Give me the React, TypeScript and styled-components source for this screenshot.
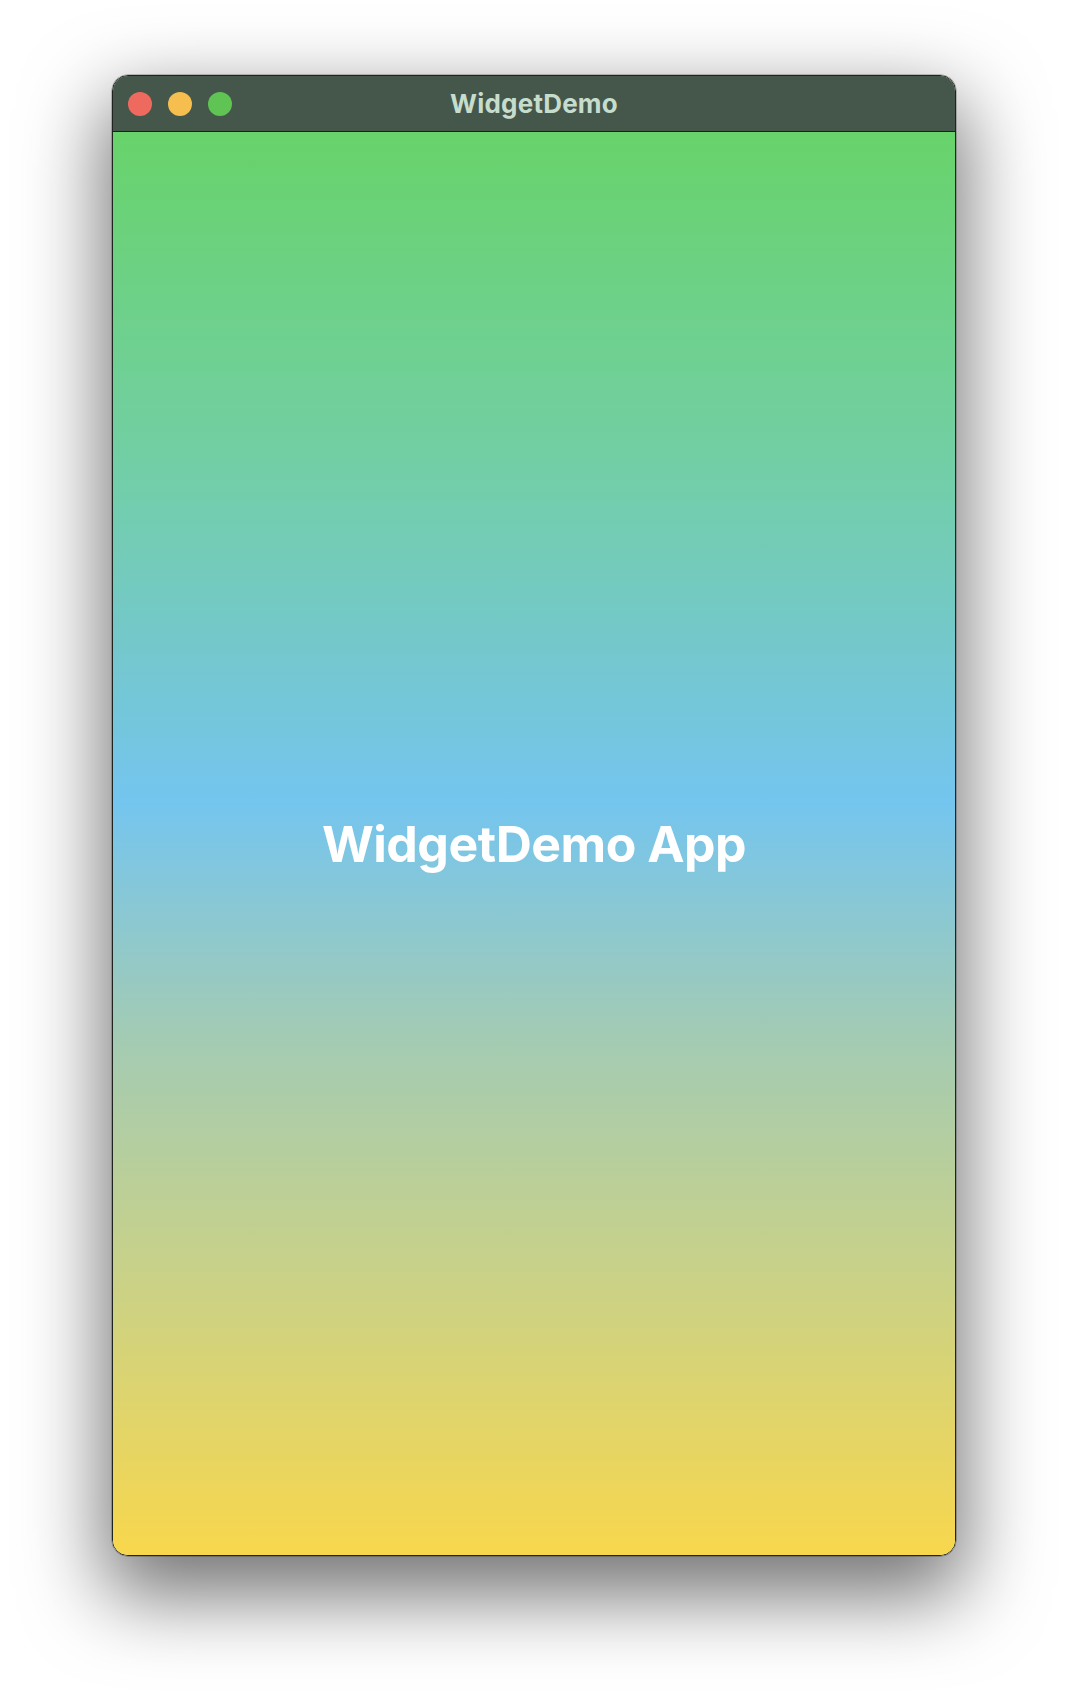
import React from "react";
import styled, { createGlobalStyle } from "styled-components";

const Global = createGlobalStyle`
  html, body { margin: 0; padding: 0; background: #ffffff; }
  body { font-family: Inter, "Noto Sans", "Liberation Sans", sans-serif; }
`;

const Page = styled.div`
  width: 1068px;
  height: 1704px;
  box-sizing: border-box;
  padding: 75px 112px 0 112px;
  background: #ffffff;
`;

const Window = styled.div`
  width: 844px;
  height: 1481px;
  box-sizing: border-box;
  border: 1px solid #1f2420;
  border-radius: 16px;
  overflow: hidden;
  display: flex;
  flex-direction: column;
  box-shadow: 0 32px 80px 8px rgba(0, 0, 0, 0.55), 0 0 0 0.5px rgba(0, 0, 0, 0.4);
`;

const TitleBar = styled.div`
  height: 56px;
  flex: none;
  box-sizing: border-box;
  background: #44574a;
  border-bottom: 1px solid #1a1f1b;
  display: flex;
  align-items: center;
  padding-left: 15px;
  position: relative;
`;

const Lights = styled.div`
  display: flex;
  gap: 16px;
  align-items: center;
`;

const Light = styled.span<{ $c: string }>`
  width: 24px;
  height: 24px;
  border-radius: 50%;
  background: ${(p) => p.$c};
  display: block;
`;

const Title = styled.div`
  position: absolute;
  left: 0;
  right: 0;
  top: 0;
  bottom: 0;
  display: flex;
  align-items: center;
  justify-content: center;
  color: #c6dccc;
  font-weight: 700;
  font-size: 26px;
  letter-spacing: 0.2px;
  pointer-events: none;
`;

const Content = styled.div`
  flex: 1;
  background: linear-gradient(
    to bottom,
    #68d36a 0%,
    #72cfa2 22%,
    #74c8cb 36%,
    #74c5ef 47%,
    #a4cbb2 64%,
    #cdd283 82%,
    #f8d74c 100%
  );
  display: flex;
  align-items: center;
  justify-content: center;
`;

const Heading = styled.h1`
  margin: 0;
  color: #ffffff;
  font-size: 50px;
  font-weight: 700;
  letter-spacing: -0.5px;
`;

export default function App() {
  return (
    <>
      <Global />
      <Page>
        <Window>
          <TitleBar>
            <Lights>
              <Light $c="#ef6a5e" />
              <Light $c="#f5be4f" />
              <Light $c="#5fc454" />
            </Lights>
            <Title>WidgetDemo</Title>
          </TitleBar>
          <Content>
            <Heading>WidgetDemo App</Heading>
          </Content>
        </Window>
      </Page>
    </>
  );
}
